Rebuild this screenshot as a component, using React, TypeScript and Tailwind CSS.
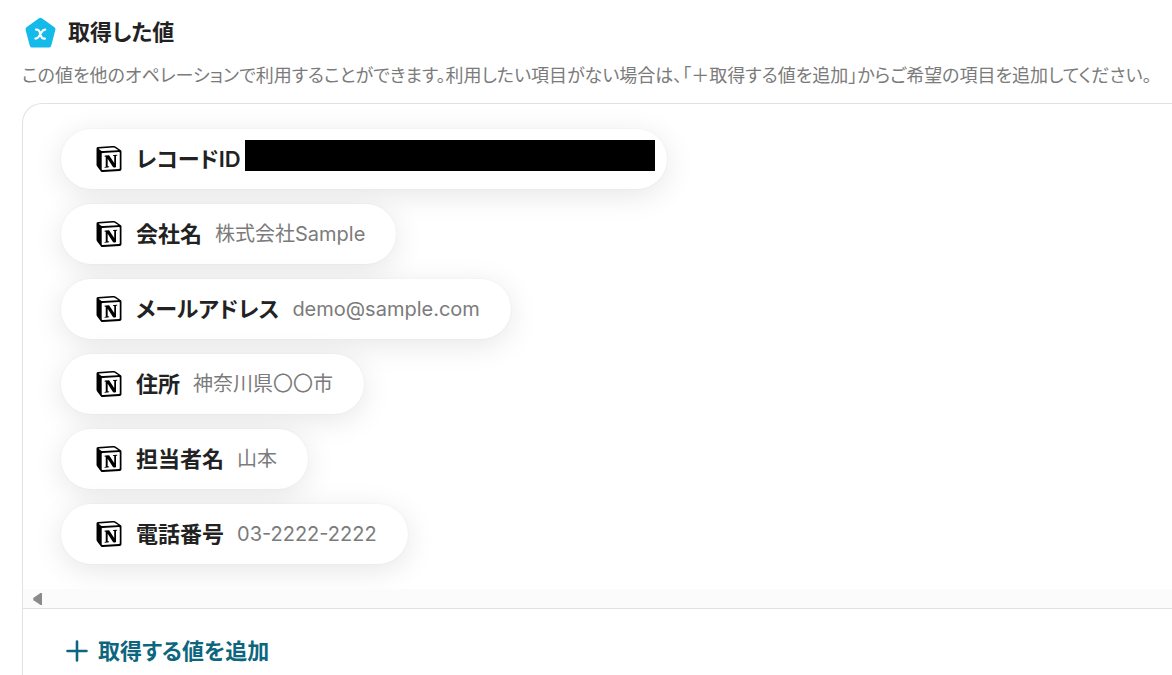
import { SiNotion } from 'react-icons/si';

interface Field {
  label: string;
  value?: string;
}

const fields: Field[] = [
  { label: 'レコードID' },
  { label: '会社名', value: '株式会社Sample' },
  { label: 'メールアドレス', value: 'demo@sample.com' },
  { label: '住所', value: '神奈川県〇〇市' },
  { label: '担当者名', value: '山本' },
  { label: '電話番号', value: '03-2222-2222' },
];

// Pentagon badge with the variable mark
function VariableIcon() {
  return (
    <svg viewBox="0 0 32 32" className="size-8 shrink-0" aria-hidden="true">
      <path
        d="M16.4 4.2 29 13.2 24.8 29H8.2L4 13.2Z"
        fill="#14baea"
        stroke="#14baea"
        strokeWidth="5"
        strokeLinejoin="round"
      />
      <path
        d="M12 13.6h1c1.400 0 2 .7 2.500 2l1.800 5c.5 1.400 1.100 2 2.500 2h1.200M21.200 13.600c-1.700 0-2.600.8-3.500 2.300l-2.600 4.400c-.9 1.500-1.900 2.300-3.700 2.300"
        fill="none"
        stroke="white"
        strokeWidth="2.2"
        strokeLinecap="round"
      />
    </svg>
  );
}

function FieldPill({ label, value }: Field) {
  return (
    <li
      className={`flex h-[60px] items-center rounded-full bg-white pl-[35px] shadow-[0_6px_30px_rgba(0,0,0,0.1),0_0_2px_rgba(0,0,0,0.06)] ${
        value ? 'pr-[31px]' : 'pr-3'
      }`}
    >
      <SiNotion className="size-[26px] shrink-0 text-black" aria-hidden="true" />
      <span className="ml-[14px] text-[22px] leading-8 font-semibold text-[#222222]">{label}</span>
      {value ? (
        <span className="ml-[13px] text-[20px] leading-8 text-[#7b7b7b]">{value}</span>
      ) : (
        <span className="mb-[7px] ml-1 h-[31px] w-[410px] bg-black" />
      )}
    </li>
  );
}

// Horizontal scroll strip under the list
function ScrollStrip() {
  return (
    <div className="flex h-5 items-center border-b border-[#e2e2e2] bg-[#fbfbfb] pl-[10px]">
      <svg viewBox="0 0 10 12" className="h-3 w-[10px]" aria-hidden="true">
        <path d="M9 0v12H7.5L.6 7.2Q-.4 6 .6 4.8L7.5 0Z" fill="#8a8a8a" />
      </svg>
    </div>
  );
}

export default function App() {
  return (
    <main className="h-screen overflow-hidden bg-white pl-[22px] font-['Inter','Noto_Sans_CJK_JP',sans-serif] [font-feature-settings:'palt']">
      <div className="flex min-h-full flex-col">
        <header className="flex items-center gap-3 pt-4 pl-[2px]">
          <VariableIcon />
          <h1 className="text-[22px] leading-8 font-semibold text-[#222222]">取得した値</h1>
        </header>
        <p className="mt-3 text-[18px] leading-8 whitespace-nowrap text-[#7b7b7b]">
          この値を他のオペレーションで利用することができます。利用したい項目がない場合は、「＋取得する値を追加」からご希望の項目を追加してください。
        </p>

        <section className="mt-[11px] grow overflow-hidden rounded-tl-[20px] border-t border-l border-[#e2e2e2] bg-white">
          <ul className="flex flex-col items-start gap-[15px] overflow-hidden pt-[25px] pb-[25px] pl-[38px]">
            {fields.map(field => (
              <FieldPill key={field.label} {...field} />
            ))}
          </ul>
          <ScrollStrip />
          <button
            type="button"
            className="mt-[26px] ml-[43px] flex items-center gap-[10px] text-[22px] leading-8 font-semibold text-[#0c667e]"
          >
            <svg viewBox="0 0 22 22" className="size-[22px]" aria-hidden="true">
              <path d="M11 1.5v19M1.5 11h19" stroke="currentColor" strokeWidth="2.6" strokeLinecap="round" />
            </svg>
            取得する値を追加
          </button>
        </section>
      </div>
    </main>
  );
}
